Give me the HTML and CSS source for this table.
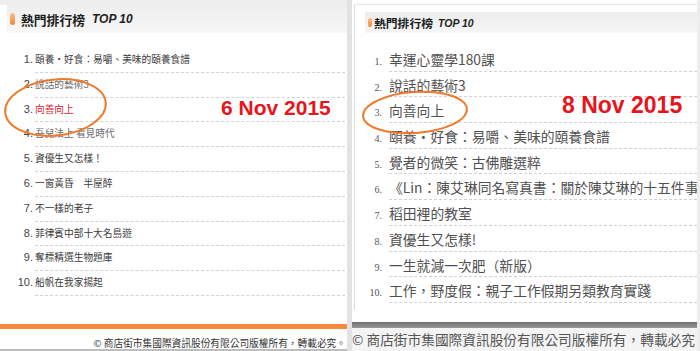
FILE: index.html
```html
<!DOCTYPE html>
<html lang="zh-Hant">
<head>
<meta charset="utf-8">
<title>熱門排行榜 TOP 10</title>
<link rel="stylesheet" href="styles.css">
</head>
<body>
<div class="page">
  <section class="shot shot-a">
    <div class="topstrip"></div>
    <div class="hd">
      <span class="dot"></span><span class="ttl">熱門排行榜</span><span class="top">TOP 10</span>
    </div>
    <ol class="rank">
      <li><span class="n">1.</span><span class="t">頤養‧好食：易嚼、美味的頤養食譜</span></li>
      <li><span class="n">2.</span><span class="t faint">說話的藝術3</span></li>
      <li><span class="n">3.</span><span class="t hot">向善向上</span></li>
      <li><span class="n">4.</span><span class="t faint">吾兒法上 看見時代</span></li>
      <li><span class="n">5.</span><span class="t">資優生又怎樣！</span></li>
      <li><span class="n">6.</span><span class="t">一窗黃昏　半屋醉</span></li>
      <li><span class="n">7.</span><span class="t">不一樣的老子</span></li>
      <li><span class="n">8.</span><span class="t">菲律賓中部十大名島遊</span></li>
      <li><span class="n">9.</span><span class="t">奪標精選生物題庫</span></li>
      <li><span class="n">10.</span><span class="t">船帆在我家揚起</span></li>
    </ol>
    <div class="bar"></div>
    <p class="copy">© 商店街市集國際資訊股份有限公司版權所有，轉載必究。</p>
  </section>
  <div class="split"></div>
  <section class="shot shot-b">
    <div class="box">
      <div class="hd">
        <span class="dot"></span><span class="ttl">熱門排行榜</span><span class="top">TOP 10</span>
      </div>
      <ol class="rank">
        <li><span class="n">1.</span><span class="t">幸運心靈學180課</span></li>
        <li><span class="n">2.</span><span class="t">說話的藝術3</span></li>
        <li><span class="n">3.</span><span class="t">向善向上</span></li>
        <li><span class="n">4.</span><span class="t">頤養‧好食：易嚼、美味的頤養食譜</span></li>
        <li><span class="n">5.</span><span class="t">覺者的微笑：古佛雕選粹</span></li>
        <li><span class="n">6.</span><span class="t">《Lin：陳艾琳同名寫真書：關於陳艾琳的十五件事》</span></li>
        <li><span class="n">7.</span><span class="t">稻田裡的教室</span></li>
        <li><span class="n">8.</span><span class="t">資優生又怎樣!</span></li>
        <li><span class="n">9.</span><span class="t">一生就減一次肥（新版）</span></li>
        <li><span class="n">10.</span><span class="t">工作，野度假：親子工作假期另類教育實踐</span></li>
      </ol>
    </div>
    <div class="bar"></div>
    <p class="copy">© 商店街市集國際資訊股份有限公司版權所有，轉載必究。</p>
  </section>

  <svg class="rings" width="700" height="351" viewBox="0 0 700 351" aria-hidden="true">
    <ellipse cx="55.5" cy="107.5" rx="50.5" ry="28" transform="rotate(-6 55.5 107.5)" />
    <ellipse cx="415" cy="112.5" rx="52" ry="20.5" transform="rotate(-4 415 112.5)" />
  </svg>
  <div class="date date-a">6 Nov 2015</div>
  <div class="date date-b">8 Nov 2015</div>
</div>
</body>
</html>
```

FILE: styles.css
```css
* { box-sizing: border-box; }
html, body { margin: 0; padding: 0; }
body {
  background: #e8e8e8;
  font-family: "Noto Sans CJK TC", "Noto Sans", sans-serif;
}
.page {
  position: relative;
  display: flex;
  width: 700px;
  height: 351px;
  overflow: hidden;
  background: #e6e6e6;
}
.shot {
  display: flex;
  flex-direction: column;
  background: #fff;
}
.shot-a { width: 347px; }
.split { width: 5px; background: #e2e2e2; }
.shot-b { width: 348px; border-right: 3px solid #ededed; }

/* ---------- left shot ---------- */
.topstrip { height: 5px; background: #eeeeee; }
.shot-a .hd {
  height: 28px;
  margin-left: 7px;
  padding-left: 3px;
  display: flex;
  align-items: center;
  background: linear-gradient(#eeeeee, #f7f7f7);
}
.dot {
  display: block;
  border-radius: 3px;
  background: linear-gradient(#f9bf8c, #ee8a3c);
}
.shot-a .dot { width: 5px; height: 12px; margin-right: 6px; }
.ttl { font-weight: 700; color: #1e1e1e; }
.shot-a .ttl { font-size: 12.8px; }
.top {
  font-family: "Liberation Sans", Arial, sans-serif;
  font-style: italic;
  font-weight: 700;
  color: #1e1e1e;
}
.shot-a .top { font-size: 12px; margin-left: 7px; }

.rank { list-style: none; margin: 0; padding: 0; }
.rank li { display: flex; align-items: baseline; }
.n { flex: none; text-align: right; }
.t {
  flex: 1;
  min-width: 0;
  white-space: nowrap;
  overflow: hidden;
  border-bottom: 1px dashed #d2d2d2;
}
.shot-a .rank { padding-top: 15px; }
.shot-a .n {
  width: 35px;
  padding-right: 2px;
  font-family: "Liberation Sans", Arial, sans-serif;
  font-size: 11px;
  color: #444;
}
.shot-a .t {
  height: 24.8px;
  line-height: 23.8px;
  margin-right: 2px;
  font-size: 9.7px;
  color: #3a3a3a;
}
.shot-a .t.faint { color: #6a6a6a; }
.shot-a .t.hot { color: #d8242c; }

.shot-a .bar { margin-top: auto; height: 5px; background: #f6893a; }
.shot-a .copy {
  margin: 0;
  height: 22px;
  padding: 7px 1px 0 0;
  line-height: 14px;
  text-align: right;
  font-size: 9.7px;
  color: #333;
  border-bottom: 2px solid #bdbdbd;
}

/* ---------- right shot ---------- */
.box {
  height: 306px;
  margin-top: 4px;
  margin-left: 2px;
  border-top: 1px solid #e6e6e6;
  border-left: 1px solid #dcdcdc;
}
.shot-b .hd {
  height: 21px;
  margin: 7px 0 0 10px;
  padding-left: 3px;
  display: flex;
  align-items: center;
  background: linear-gradient(#ececec, #f6f6f6);
}
.shot-b .dot { width: 4px; height: 9px; border-radius: 2px; margin-right: 2px; }
.shot-b .ttl { font-size: 11.8px; }
.shot-b .top { font-size: 10.5px; margin-left: 5px; }
.shot-b .rank { padding-top: 13px; }
.shot-b .n {
  width: 34px;
  padding-right: 7px;
  font-family: "Liberation Serif", "Times New Roman", serif;
  font-size: 10px;
  color: #555;
}
.shot-b .t {
  height: 25.7px;
  line-height: 26px;
  font-size: 13.8px;
  color: #505050;
}
.shot-b .bar {
  margin-top: auto;
  height: 6px;
  background: linear-gradient(#6e6e6e, #9a9a9a);
}
.shot-b .copy {
  margin: 0;
  height: 23px;
  line-height: 23px;
  padding-left: 0;
  white-space: nowrap;
  overflow: hidden;
  font-size: 13.7px;
  color: #555;
  background: #f4f4f4;
}

/* ---------- annotations ---------- */
.rings {
  position: absolute;
  left: 0;
  top: 0;
  pointer-events: none;
}
.rings ellipse { fill: none; stroke: #f07a2c; stroke-width: 2; }
.date {
  position: absolute;
  font-family: "Liberation Sans", Arial, sans-serif;
  font-weight: 700;
  line-height: 1;
  color: #e8141c;
  white-space: nowrap;
}
.date-a { left: 221px; top: 97px; font-size: 21px; }
.date-b { left: 562px; top: 94px; font-size: 23px; }
```
